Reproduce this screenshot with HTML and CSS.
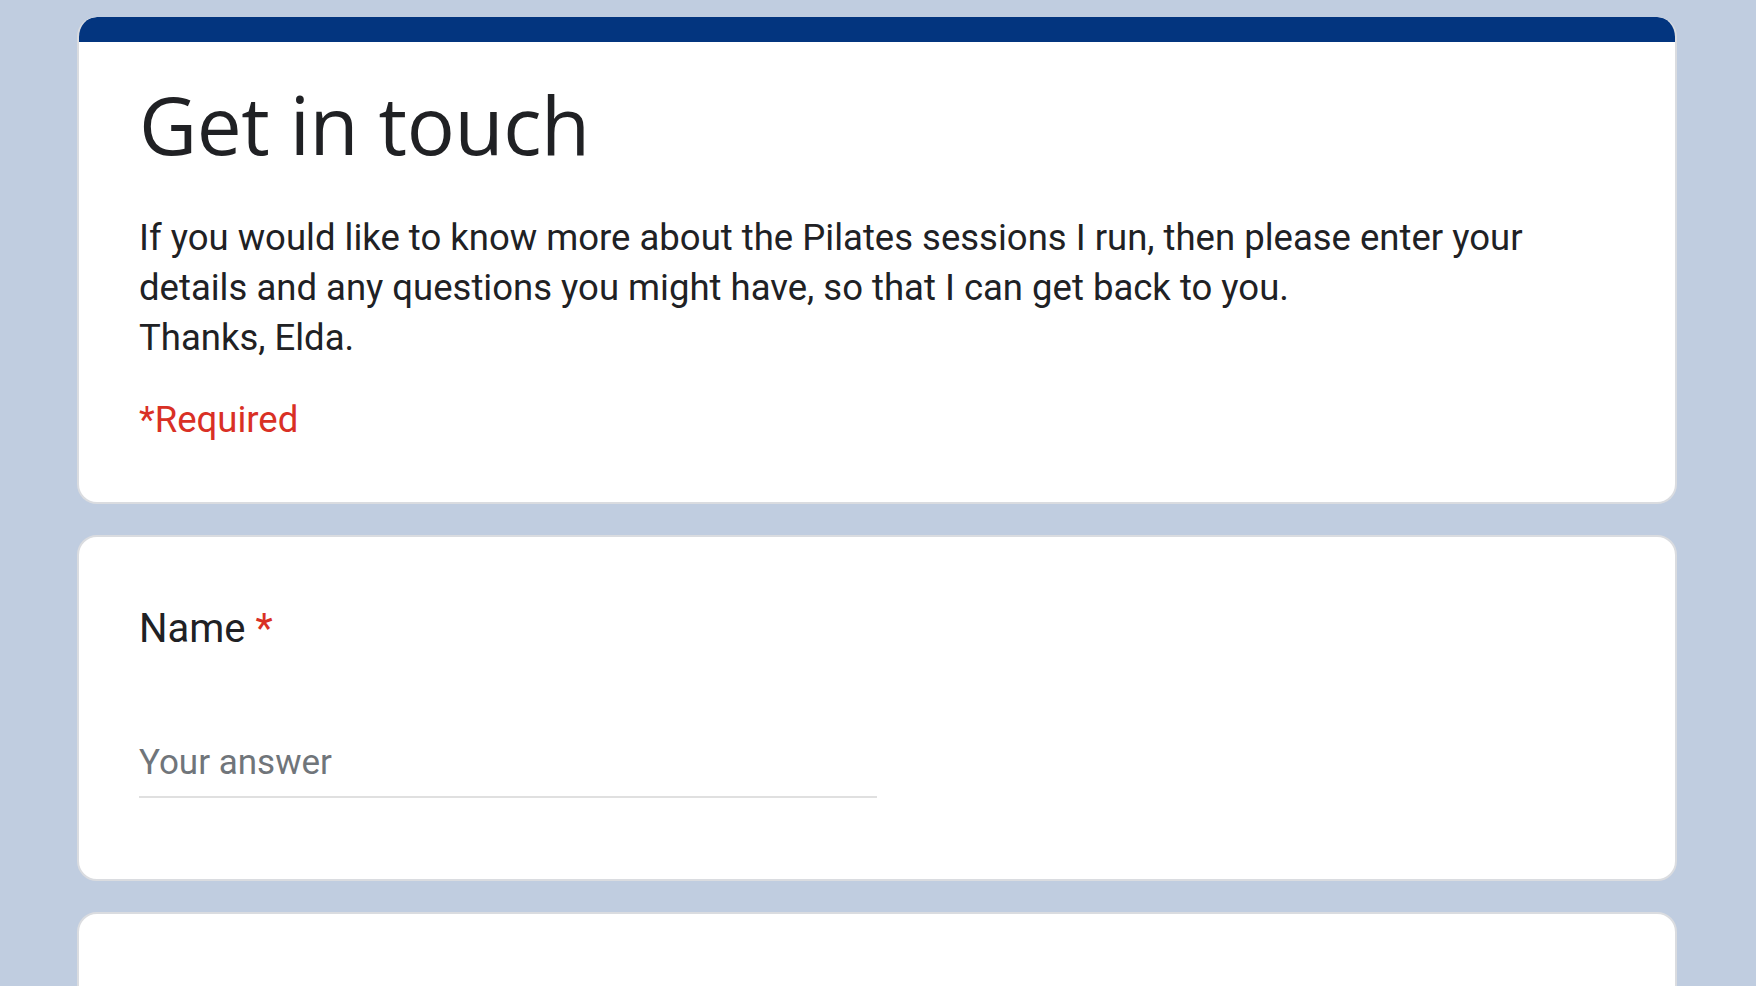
FILE: index.html
```html
<!DOCTYPE html>
<html lang="en">
<head>
<meta charset="utf-8">
<title>Get in touch</title>
<link rel="stylesheet" href="styles.css">
</head>
<body>
<main class="form">
  <section class="card header-card">
    <div class="top-bar"></div>
    <div class="header-body">
      <h1 class="title">Get in touch</h1>
      <div class="description">If you would like to know more about the Pilates sessions I run, then please enter your details and any questions you might have, so that I can get back to you.<br>Thanks, Elda.</div>
      <div class="required-note">*Required</div>
    </div>
  </section>
  <section class="card question-card">
    <div class="question-title">Name <span class="star">*</span></div>
    <div class="answer">
      <div class="placeholder">Your answer</div>
    </div>
  </section>
  <section class="card question-card"></section>
</main>
</body>
</html>
```

FILE: styles.css
```css
html, body {
  margin: 0;
  padding: 0;
  background: #c0cde0;
  height: 100%;
  overflow: hidden;
}
body {
  font-family: Roboto, "Liberation Sans", Arial, sans-serif;
  color: #202124;
}
.form {
  width: 1600px;
  margin: 0 0 0 77px;
  padding-top: 17px;
  display: flex;
  flex-direction: column;
  gap: 31px;
}
.card {
  background: #ffffff;
  border: 2.5px solid #dadce0;
  border-radius: 20px;
  box-sizing: border-box;
}
.header-card {
  border-top: none;
  overflow: hidden;
}
.top-bar {
  height: 25px;
  background: #03357f;
  margin: 0 -2.5px;
  border-radius: 20px 20px 0 0;
}
.header-body {
  padding: 32px 60px 57px 60px;
}
.title {
  margin: 0;
  font-family: "Open Sans", Roboto, sans-serif;
  font-weight: 400;
  font-size: 80px;
  line-height: 100px;
  letter-spacing: -0.4px;
  color: #202124;
}
.description {
  margin-top: 39px;
  font-size: 36.5px;
  line-height: 50px;
  color: #202124;
}
.required-note {
  margin-top: 31.5px;
  font-size: 36.5px;
  line-height: 50px;
  color: #d93025;
}
.question-card {
  padding: 62px 60px 80.5px 60px;
  min-height: 200px;
}
.question-card:last-child {
  min-height: 400px;
}
.question-title {
  font-size: 40px;
  line-height: 60px;
  color: #202124;
}
.star {
  color: #d93025;
}
.answer {
  margin-top: 79.5px;
  width: 50%;
  border-bottom: 2.5px solid #e0e0e0;
  padding-bottom: 8px;
}
.placeholder {
  font-size: 35px;
  line-height: 50px;
  color: #70757a;
}
```
